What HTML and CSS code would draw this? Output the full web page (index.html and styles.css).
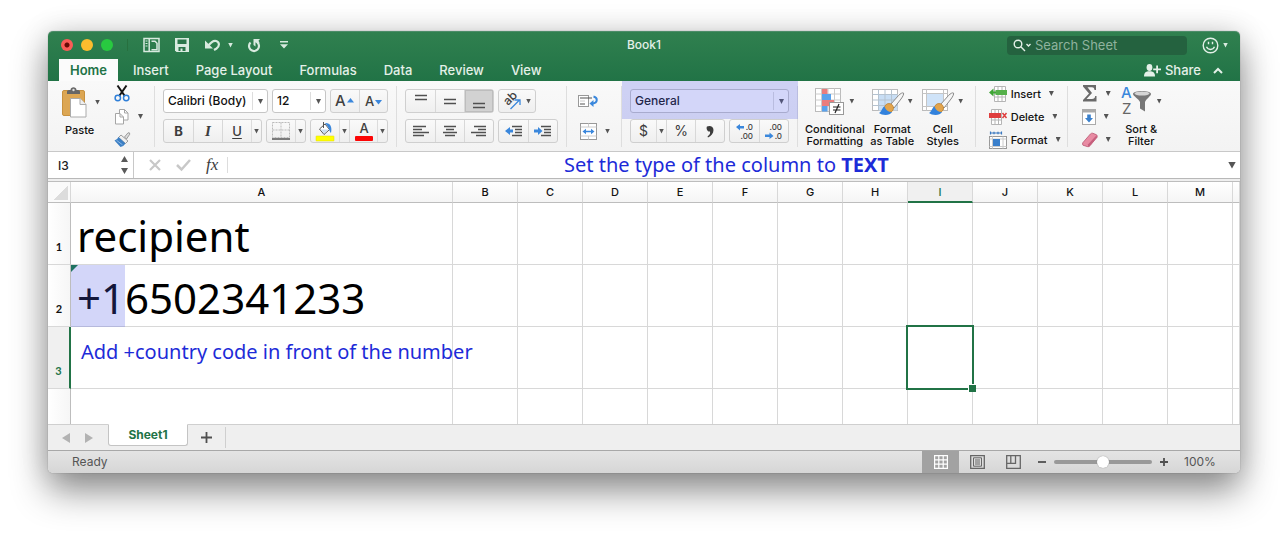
FILE: index.html
```html
<!DOCTYPE html>
<html lang="en">
<head>
<meta charset="utf-8">
<title>Book1</title>
<link rel="stylesheet" href="styles.css">
</head>
<body>
<main class="window">
  <header class="header">
    <div class="titlebar">
      <div class="title-left">
        <div class="lights">
          <button class="light red" aria-label="Close"></button>
          <button class="light yellow" aria-label="Minimize"></button>
          <button class="light green" aria-label="Full screen"></button>
        </div>
        <div class="quick">
          <button class="plain" aria-label="Gallery"><svg width="17" height="16" viewBox="0 0 17 16" fill="none" stroke="#d8eadf" stroke-width="1.5"><rect x="1" y="1.5" width="15" height="13"/><path d="M6.200 1v14M8.500 4.200h3.500l2 2v6.500H8.500"/><path d="M2.500 4h2M2.500 6.500h2M2.500 9h2" stroke-width="1"/></svg></button>
          <button class="plain save" aria-label="Save"><svg width="16" height="16" viewBox="0 0 16 16"><path d="M1 1h14v14H2.500L1 13.500z" fill="#d8eadf"/><path d="M3.500 2.500h9V7h-9zM4.500 10h7v4H8.500v-2.500h-2V14h-2z" fill="#2a764a"/></svg></button>
          <button class="plain undo" aria-label="Undo"><svg width="17" height="14" viewBox="0 0 17 14"><path d="M1 2.500v8h8z" fill="#d8eadf"/><path d="M4 8C7 4 9.500 2.200 12.200 3c3.800 1.200 3.300 5.500.3 7.500L10 12" fill="none" stroke="#d8eadf" stroke-width="2.200"/></svg></button>
          <span class="caret light-caret"></span>
          <button class="plain redo" aria-label="Repeat"><svg width="14" height="15" viewBox="0 0 14 15"><path d="M3.500 4.500a5 5 0 1 0 7 0" fill="none" stroke="#d8eadf" stroke-width="2.200"/><path d="M6.500 1H13L11.500 2.800l1 2-1.500 1.500-2.500-2V8.500L6.500 7z" fill="#d8eadf"/></svg></button>
          <button class="plain more" aria-label="Customize"><svg width="10" height="8" viewBox="0 0 10 8" fill="#d8eadf"><path d="M1 0h8v1.500H1zM1 3.200h8L5 7.500z"/></svg></button>
        </div>
      </div>
      <h1 class="title">Book1</h1>
      <div class="title-right">
        <label class="search">
          <svg width="19" height="13" viewBox="0 0 19 13" fill="none" stroke="#e4f0e8" stroke-width="1.400"><circle cx="5" cy="5" r="3.800"/><path d="M7.800 7.800 12 12M13.500 5l2 2 2-2"/></svg>
          <input type="search" placeholder="Search Sheet" aria-label="Search Sheet">
        </label>
        <button class="plain" aria-label="Feedback"><svg width="17" height="17" viewBox="0 0 17 17" fill="none" stroke="#e4f0e8" stroke-width="1.400"><circle cx="8.500" cy="8.500" r="7.300"/><path d="M6.500 4.800v2.500M10.500 4.800v2.500M4.500 9.800c1.500 3.500 6.500 3.500 8 0"/></svg></button>
        <span class="caret light-caret"></span>
      </div>
    </div>
    <nav class="tabs">
      <button class="tab active">Home</button>
      <button class="tab">Insert</button>
      <button class="tab">Page Layout</button>
      <button class="tab">Formulas</button>
      <button class="tab">Data</button>
      <button class="tab">Review</button>
      <button class="tab">View</button>
      <button class="share"><svg width="17" height="13" viewBox="0 0 17 13" fill="#e4f0e8"><ellipse cx="5.500" cy="3.500" rx="2.900" ry="3.400"/><path d="M0 12.500c0-4 2-5 4-5.300h3c2 .3 4 1.300 4 5.300z"/><path d="M12.200 1.500h1.800v3h3v1.800h-3v3h-1.800v-3h-3V4.500h3z"/></svg>Share</button>
      <button class="plain fold" aria-label="Collapse ribbon"><svg width="10" height="7" viewBox="0 0 10 7" fill="none" stroke="#e4f0e8" stroke-width="2"><path d="M1 6l4-4 4 4"/></svg></button>
    </nav>
  </header>

  <section class="ribbon" aria-label="Home ribbon">
    <div class="group clipboard">
      <button class="big">
        <span class="big-icon"><svg width="25" height="31" viewBox="0 0 25 31"><rect x="0.500" y="3.500" width="22" height="25" rx="1.500" fill="#dca653" stroke="#c8913e"/><path d="M5 7V4.500Q5 3 7 3h1.500C8.500-.6 14.500-.6 14.500 3H16q2 0 2 1.500V7z" fill="#666"/><circle cx="11.500" cy="3" r="1.200" fill="#ddd"/><path d="M8.500 11.500H18l6 6v12.500H8.500z" fill="#fff" stroke="#aaa"/><path d="M18 11.500v6h6" fill="#eee" stroke="#aaa"/></svg><span class="caret"></span></span>
        <span>Paste</span>
      </button>
      <div class="stack clip-tools">
        <button class="plain" aria-label="Cut"><svg width="16" height="17" viewBox="0 0 16 17" fill="none"><path d="M3.500.5 10.800 11M12.500.5 5.200 11" stroke="#151515" stroke-width="2"/><circle cx="3.800" cy="13" r="2.700" stroke="#2f7fd8" stroke-width="1.500"/><circle cx="12.200" cy="13" r="2.700" stroke="#2f7fd8" stroke-width="1.500"/></svg></button>
        <button class="plain row-tool" aria-label="Copy"><svg width="16" height="16" viewBox="0 0 16 16" fill="#fff" stroke="#a5a5a5"><path d="M5.500.5h5l3.500 3.500v7H5.500z"/><path d="M1.500 4.500h4.500L9.500 8v7h-8z"/><path d="M6 4.500V8h3.500M10.500.5V4H14" fill="none"/></svg><span class="caret"></span></button>
        <button class="plain" aria-label="Format painter"><svg width="17" height="15" viewBox="0 0 17 15"><path d="M10.500 5 14 .8q2.300-.5 1.700 1.500L12.500 7z" fill="#ddd" stroke="#888" stroke-width=".8"/><path d="m7 3 7 6-2.500 2.500-7-6z" fill="#f0f0f0" stroke="#888" stroke-width=".8"/><path d="m4.500 5 7 6.500q-2 3-5 3.500L.5 8.500q3-1 4-3.500z" fill="#3c7fc4"/><path d="m2.500 8.300 6 4.500" stroke="#8ab9e8"/></svg></button>
      </div>
    </div>

    <div class="group rows font-group">
      <div class="line">
        <span class="combo font-name"><select aria-label="Font"><option>Calibri (Body)</option></select></span>
        <span class="combo font-size"><select aria-label="Font size"><option>12</option></select></span>
        <span class="seg narrow"><button aria-label="Increase font size"><svg width="20" height="14" viewBox="0 0 20 14"><text x="0" y="12" class="glyph g15">A</text><path d="M12 8.500h7L15.500 4z" fill="#3a87dc"/></svg></button><button aria-label="Decrease font size"><svg width="19" height="14" viewBox="0 0 19 14"><text x="1" y="12" class="glyph g13">A</text><path d="M11 6h7l-3.500 4.500z" fill="#3a87dc"/></svg></button></span>
      </div>
      <div class="line">
        <span class="seg"><button class="bold">B</button><button class="ital">I</button><button class="under">U</button><button class="drop" aria-label="Underline style"><span class="caret"></span></button></span>
        <span class="seg narrow"><button aria-label="Borders"><svg width="18" height="18" viewBox="0 0 18 18" fill="none" stroke="#bbb"><path d="M.5.5h17v15H.5zM9 .5v15M.5 8h17" stroke-dasharray="2 1"/><path d="M0 17h18" stroke="#555" stroke-width="1.500"/></svg></button><button class="drop" aria-label="Border style"><span class="caret"></span></button></span>
        <span class="seg narrow"><button aria-label="Fill color"><svg width="18" height="20" viewBox="0 0 18 20"><path d="m3.500 8 5.500-5 4.500 5.500L8 13.500z" fill="#fff" stroke="#555"/><path d="M7.500 1v6" stroke="#555" fill="none"/><path d="M4.500 8.500h8l-4.500 4z" fill="#c8dcf0"/><path d="M9 2c5-.5 7.500 3.500 6 10-2-2-1.500-5.500-6-10z" fill="#3a87dc"/><rect y="15" width="18" height="5" rx=".5" fill="#ff0" stroke="#e0da00" stroke-width=".5"/></svg></button><button class="drop" aria-label="More fill colors"><span class="caret"></span></button><button class="part" aria-label="Font color"><svg width="18" height="20" viewBox="0 0 18 20"><text x="9" y="12" text-anchor="middle" class="glyph g13">A</text><rect y="15" width="18" height="5" rx="1" fill="#fb0505"/></svg></button><button class="drop" aria-label="More font colors"><span class="caret"></span></button></span>
      </div>
    </div>

    <div class="group rows">
      <div class="line">
        <span class="seg"><button aria-label="Top align"><svg width="12" height="16" class="strokes" viewBox="0 0 12 16"><path d="M0 2.500h12M0 6.500h12"/></svg></button><button aria-label="Middle align"><svg width="12" height="16" class="strokes" viewBox="0 0 12 16"><path d="M0 6.500h12M0 10.500h12"/></svg></button><button class="on" aria-label="Bottom align"><svg width="12" height="16" class="strokes" viewBox="0 0 12 16"><path d="M0 10.500h12M0 14.500h12"/></svg></button></span>
        <span class="seg"><button class="orient" aria-label="Orientation"><svg width="18" height="18" viewBox="0 0 18 18"><text transform="translate(5 14) rotate(-45)" class="glyph g12">ab</text><path d="m7.500 17 9-9M11.500 8H17v5" fill="none" stroke="#3a87dc" stroke-width="1.300"/></svg><span class="caret"></span></button></span>
      </div>
      <div class="line">
        <span class="seg"><button aria-label="Align left"><svg width="16" height="12" class="strokes" viewBox="0 0 16 12"><path d="M0 1.500h13M0 4.500h9M0 7.500h16M0 10.500h11"/></svg></button><button aria-label="Center"><svg width="14" height="12" class="strokes" viewBox="0 0 14 12"><path d="M1 1.500h12M3 4.500h8M0 7.500h14M2 10.500h10"/></svg></button><button aria-label="Align right"><svg width="16" height="12" class="strokes" viewBox="0 0 16 12"><path d="M3 1.500h12M7 4.500h8M0 7.500h15M5 10.500h10"/></svg></button></span>
        <span class="seg"><button aria-label="Decrease indent"><svg width="18" height="12" viewBox="0 0 18 12"><path d="M0 6 5 2v2.500h3v3H5V10z" fill="#3a87dc"/><path class="strokes" d="M7 1.500h10M10 4.500h7M10 7.500h7M7 10.500h10"/></svg></button><button aria-label="Increase indent"><svg width="18" height="12" viewBox="0 0 18 12"><path d="M8.500 6 4 2v2.500H0v3h4V10z" fill="#3a87dc"/><path class="strokes" d="M7 1.500h10M10 4.500h7M10 7.500h7M7 10.500h10"/></svg></button></span>
      </div>
    </div>

    <div class="group rows wrap-group">
      <div class="line"><button class="plain" aria-label="Wrap text"><svg width="21" height="14" viewBox="0 0 21 14" fill="none"><rect x=".5" y="1.500" width="10" height="11" fill="#fff" stroke="#999"/><path d="M2 4h12M2 10h5" stroke="#555" stroke-width="1.200"/><path d="M2 7h5" stroke="#ccc"/><path d="M15.500 2.500c4.500 1 4.500 6.500-1 7" stroke="#3a87dc" stroke-width="2"/><path d="m11.500 9.500 4-3.500v7z" fill="#3a87dc"/></svg></button></div>
      <div class="line"><button class="plain merge" aria-label="Merge"><svg width="17" height="17" viewBox="0 0 17 17" fill="none"><rect x=".5" y=".5" width="16" height="16" fill="#fff" stroke="#999"/><path d="M.5 4h16M.5 13h16M8.500.5V4M8.500 13v3.500" stroke="#ccc"/><path d="M4 8.500h9" stroke="#3a87dc" stroke-width="1.500"/><path d="M2.500 8.500 6 5.700v5.600zM14.500 8.500 11 5.700v5.600z" fill="#3a87dc"/></svg><span class="caret"></span></button></div>
    </div>

    <div class="group rows number-group">
      <div class="line"><span class="combo format"><select aria-label="Number format"><option>General</option></select></span></div>
      <div class="line">
        <span class="seg"><button class="sym dollar">$</button><button class="drop" aria-label="Currencies"><span class="caret"></span></button><button class="sym part">%</button><button aria-label="Comma style"><svg width="8" height="13" viewBox="0 0 8 13"><path d="M1 1.500C4 0 7.500 1.500 7.500 5c0 3.500-2.500 6-5.500 7.500l-.5-1C3.500 10 4.500 8.500 4 6.500 1 7 0 3 1 1.500z" fill="#3c3c3c"/></svg></button></span>
        <span class="seg"><button aria-label="Increase decimal"><svg width="18" height="17" viewBox="0 0 18 17"><path d="M0 4 4 1v2h4v2.500H4v2z" fill="#3a87dc"/><text x="17" y="7" text-anchor="end" class="glyph g8">.0</text><text x="17" y="16" text-anchor="end" class="glyph g8">.00</text></svg></button><button aria-label="Decrease decimal"><svg width="18" height="17" viewBox="0 0 18 17"><path d="M8.500 13 4.500 9.500v2H0V14h4.500v2z" fill="#3a87dc"/><text x="17" y="7" text-anchor="end" class="glyph g8">.00</text><text x="17" y="16" text-anchor="end" class="glyph g8">.0</text></svg></button></span>
      </div>
      <div class="format-highlight"></div>
    </div>

    <div class="group styles-group">
      <button class="big">
        <span class="big-icon"><svg width="30" height="30" viewBox="0 0 30 30"><rect x=".5" y="2.500" width="25" height="23" fill="#fff" stroke="#bbb"/><path d="M6.500 2.500v23M13 2.500v23M19.500 2.500v23M.5 8h25M.5 14h25M.5 20h25" stroke="#ccc"/><path d="M7 3h5.500v5H7zM7 14h12v6H7z" fill="#ea7d7d"/><path d="M7 8h9v6H7zM7 20h5.500v5.500H7z" fill="#5aa2ec"/><rect x="14.500" y="16.500" width="14" height="12" fill="#fff" stroke="#999"/><path d="M18 21h7.500M18 24h7.500M24 18l-4 9" stroke="#222" stroke-width="1.200"/></svg><span class="caret"></span></span>
        <span>Conditional<br>Formatting</span>
      </button>
      <button class="big">
        <span class="big-icon"><svg width="32" height="30" viewBox="0 0 32 30"><rect x=".5" y="3.500" width="25" height="21" fill="#fff" stroke="#bbb"/><path d="M7 8h18.500v16.500H7z" fill="#c8def5"/><path d="M6.500 3.500v21M13 3.500v21M19.500 3.500v21M.5 8.500h25M.5 14h25M.5 19.500h25" stroke="#b5c3d0"/><path d="M31.500 7c-1-.6-3 .5-5 2.500l-8 9 3.500 3.500 7-9c2-2.700 3-5 2.500-6z" fill="#f5f5f5" stroke="#8a8a8a"/><circle cx="17" cy="22" r="4.500" fill="#e2a44c" stroke="#b87b2a" stroke-width=".7"/><path d="M12.500 20.500c-2 .3-2.500 4.500-5.500 6.500 3 2.500 11 3 13-1-4 0-6.500-2-7.500-5.500z" fill="#3382dc"/></svg><span class="caret"></span></span>
        <span>Format<br>as Table</span>
      </button>
      <button class="big">
        <span class="big-icon"><svg width="32" height="30" viewBox="0 0 32 30"><rect x=".5" y="3.500" width="25" height="21" fill="#fff" stroke="#bbb"/><path d="M4.500 3.500v21M21.500 3.500v21M.5 7.500h25M.5 20.500h25" stroke="#c5c5c5"/><path d="M5 8h16v12H5z" fill="#cfe3f8"/><path d="M31.500 7c-1-.6-3 .5-5 2.500l-8 9 3.500 3.500 7-9c2-2.700 3-5 2.500-6z" fill="#f5f5f5" stroke="#8a8a8a"/><circle cx="17" cy="22" r="4.500" fill="#e2a44c" stroke="#b87b2a" stroke-width=".7"/><path d="M12.500 20.500c-2 .3-2.500 4.500-5.500 6.500 3 2.500 11 3 13-1-4 0-6.500-2-7.500-5.500z" fill="#3382dc"/></svg><span class="caret"></span></span>
        <span>Cell<br>Styles</span>
      </button>
    </div>

    <div class="group stack cells-group">
      <button class="row-tool"><svg width="18" height="16" viewBox="0 0 18 16"><path d="M5.500.5h11v15h-11zM9 .5v15M13 .5v15M5.500 11h11" fill="#fff" stroke="#b5b5b5"/><rect x="6.500" y="4" width="11.500" height="5" fill="#55b04a"/><path d="M0 6.500 4.500 2.500v3H7v2H4.500v3z" fill="#3fa535"/></svg>Insert<span class="caret"></span></button>
      <button class="row-tool"><svg width="18" height="16" viewBox="0 0 18 16"><path d="M2.500.5h10v15h-10zM6 .5v15M9.500.5v15M2.500 11h10" fill="#fff" stroke="#b5b5b5"/><rect y="4" width="12" height="5" fill="#df3f3f"/><path d="m13.500 4 4 5M17.500 4l-4 5" stroke="#df3f3f" stroke-width="1.500"/></svg>Delete<span class="caret"></span></button>
      <button class="row-tool"><svg width="18" height="18" viewBox="0 0 18 18"><path d="M1 2h12M1.500.5v3M12.500.5v3M5 .8v2.400M9 .8v2.400" stroke="#3a78c0" stroke-width="1.200"/><rect x=".5" y="5.500" width="17" height="12" fill="#fff" stroke="#999"/><path d="M3.500 5.500v12M14 5.500v12M.5 8h17M.5 15.500h17" stroke="#ccc"/><rect x="4" y="8" width="7" height="7" fill="#3a80cc"/></svg>Format<span class="caret"></span></button>
    </div>

    <div class="group edit-group">
      <div class="stack">
        <button class="row-tool" aria-label="AutoSum"><svg width="16" height="17" viewBox="0 0 16 17"><path d="M1 0h13v5h-1.500c-.3-2-1-2.700-2.500-2.700H5.500L10 8l-5.500 6H10c2 0 2.800-.8 3.200-3h1.300v5.500H1V15l6-6.500L1 1.500z" fill="#6a6a6a"/></svg><span class="caret"></span></button>
        <button class="row-tool" aria-label="Fill"><svg width="14" height="16" viewBox="0 0 14 16"><rect x=".5" y=".5" width="13" height="15" fill="#fff" stroke="#aaa"/><path d="M.5 1h13v2.500H.5z" fill="#aaa"/><path d="M5.200 5.500h3.600V9H11l-4 4.500L3 9h2.200z" fill="#3a80cc"/></svg><span class="caret"></span></button>
        <button class="row-tool" aria-label="Clear"><svg width="16" height="16" viewBox="0 0 17 16"><path d="M.8 11 9 1.500q1-1 2.500-.7l4 1.700q.9.700.6 2.500L8.500 14q-1 1.500-3 1L1 13.500q-.8-1-.2-2.500z" fill="#e88ba3" stroke="#b5506c" stroke-width=".8"/><path d="m6.500 12.500 9-9.500.3 2L8.500 14q-1 1.200-2.200 1z" fill="#c65f7d"/></svg><span class="caret"></span></button>
      </div>
      <button class="big">
        <span class="big-icon"><svg width="32" height="30" viewBox="0 0 32 30"><text x="0" y="12" class="glyph g15 az">A</text><text x="1" y="28" class="glyph g15 zed">Z</text><path d="M12 8c0-4 18-4 18 0 0 2-5 5-6 8v9.500l-5-3V16c-1-3-7-6-7-8z" fill="#777"/><ellipse cx="21" cy="7.500" rx="7.500" ry="2" fill="#d5d5d5"/></svg><span class="caret"></span></span>
        <span>Sort &amp;<br>Filter</span>
      </button>
    </div>
  </section>

  <section class="formula-bar">
    <div class="namebox">
      <input value="I3" aria-label="Name box">
      <svg width="9" height="18" viewBox="0 0 9 18" fill="#5a5a5a"><path d="M1 6h7L4.500 0zM1 12h7l-3.500 6z"/></svg>
    </div>
    <button class="plain" aria-label="Cancel"><svg width="12" height="12" viewBox="0 0 12 12" stroke="#c8c8c8" stroke-width="2.200"><path d="m1 1 10 10M11 1 1 11"/></svg></button>
    <button class="plain" aria-label="Enter"><svg width="15" height="12" viewBox="0 0 15 12" fill="none" stroke="#c8c8c8" stroke-width="2.500"><path d="m1 6 4.500 4.500L14 1"/></svg></button>
    <button class="fx" aria-label="Insert function">fx</button>
    <input class="formula" aria-label="Formula">
    <span class="caret big-caret"></span>
    <p class="note type-note">Set the type of the column to <b>TEXT</b></p>
  </section>

  <div class="sheet">
    <table class="grid">
      <colgroup><col class="c-head"><col class="c-a"><col class="c-n" span="12"><col></colgroup>
      <thead>
        <tr><th class="corner"></th><th>A</th><th>B</th><th>C</th><th>D</th><th>E</th><th>F</th><th>G</th><th>H</th><th class="sel">I</th><th>J</th><th>K</th><th>L</th><th>M</th><th></th></tr>
      </thead>
      <tbody>
        <tr><th>1</th><td>recipient</td><td></td><td></td><td></td><td></td><td></td><td></td><td></td><td></td><td></td><td></td><td></td><td></td><td></td></tr>
        <tr><th>2</th><td class="flagged"><span class="prefix-highlight"></span>+16502341233</td><td></td><td></td><td></td><td></td><td></td><td></td><td></td><td></td><td></td><td></td><td></td><td></td><td></td></tr>
        <tr><th class="sel">3</th><td class="noted"><p class="note code-note">Add +country code in front of the number</p></td><td></td><td></td><td></td><td></td><td></td><td></td><td></td><td class="current"></td><td></td><td></td><td></td><td></td><td></td></tr>
        <tr class="cut"><th></th><td></td><td></td><td></td><td></td><td></td><td></td><td></td><td></td><td></td><td></td><td></td><td></td><td></td><td></td></tr>
      </tbody>
    </table>
  </div>

  <nav class="sheets">
    <button class="plain" aria-label="Previous sheet"><svg width="8" height="10" viewBox="0 0 8 10" fill="#b2b2b2"><path d="M8 0v10L0 5z"/></svg></button>
    <button class="plain" aria-label="Next sheet"><svg width="8" height="10" viewBox="0 0 8 10" fill="#b2b2b2"><path d="M0 0v10l8-5z"/></svg></button>
    <button class="sheet-tab">Sheet1</button>
    <button class="add" aria-label="Add sheet"><svg width="11" height="11" viewBox="0 0 11 11" stroke="#505050" stroke-width="1.800"><path d="M5.500 0v11M0 5.500h11"/></svg></button>
  </nav>

  <footer class="status">
    <span class="ready">Ready</span>
    <button class="view on" aria-label="Normal view"><svg width="14" height="14" viewBox="0 0 14 14" fill="none" stroke="#fff" stroke-width="1.200"><path d="M.6.6h12.800v12.800H.6zM4.800.6v12.800M9.200.6v12.800M.6 4.800h12.800M.6 9.200h12.800"/></svg></button>
    <button class="view" aria-label="Page layout view"><svg width="15" height="14" viewBox="0 0 15 14" fill="none" stroke="#666" stroke-width="1.300"><path d="M.7.7h13.600v12.600H.7z"/><path d="M3.500 2.800h8v8.400h-8zM5 5h5M5 7h5M5 9h5" stroke-width="1"/></svg></button>
    <button class="view" aria-label="Page break view"><svg width="15" height="14" viewBox="0 0 15 14" fill="none" stroke="#666" stroke-width="1.300"><path d="M.7.7h13.600v12.600H.7zM4.800.7v7.600M9.500.7v7.600H.7"/></svg></button>
    <button class="plain zoom-out" aria-label="Zoom out"><svg width="8" height="8" viewBox="0 0 8 8" stroke="#505050" stroke-width="1.800"><path d="M0 4h8"/></svg></button>
    <input class="zoom" type="range" min="0" max="200" value="100" aria-label="Zoom">
    <button class="plain" aria-label="Zoom in"><svg width="8" height="8" viewBox="0 0 8 8" stroke="#505050" stroke-width="1.800"><path d="M0 4h8M4 0v8"/></svg></button>
    <span class="percent">100%</span>
  </footer>
</main>
</body>
</html>
```
FILE: styles.css
```css
* { box-sizing: border-box; }
body {
  margin: 0;
  padding: 31px 48px 67px;
  background: #fff;
  font: 500 11px/12px Inter, "Liberation Sans", sans-serif;
  color: #222;
  overflow: hidden;
}
button, input, select { font: inherit; color: inherit; margin: 0; padding: 0; border: 0; background: none; }
button { display: flex; flex: none; align-items: center; justify-content: center; }
svg { display: block; flex: none; overflow: visible; }
p { margin: 0; }

.window {
  border-radius: 5px;
  box-shadow: 0 0 1px rgba(0, 0, 0, .5), 0 18px 36px rgba(0, 0, 0, .44), 0 0 30px rgba(0, 0, 0, .12);
  background: #fff;
}
.caret {
  flex: none;
  width: 5px;
  height: 5px;
  background: #555;
  clip-path: polygon(0 0, 100% 0, 50% 100%);
}
.light-caret { background: #d8eadf; }

/* Title bar and tabs */
.header {
  height: 50px;
  border-radius: 5px 5px 0 0;
  border-top: 1px solid #4c8c68;
  background: linear-gradient(#30804f, #217346);
  color: #e4f0e8;
}
.titlebar { display: grid; grid-template-columns: 1fr auto 1fr; align-items: center; height: 26px; }
.title-left, .title-right, .quick, .lights { display: flex; align-items: center; }
.lights { gap: 8px; padding: 0 14px 0 13px; margin-right: 15px; border-right: 1px solid #27703f; }
.light { width: 12px; height: 12px; border-radius: 50%; }
.red { background: radial-gradient(circle, #6b0a06 0 2px, #fc5b57 3px); }
.yellow { background: #fdbc2e; }
.green { background: #28c940; }
.save { margin-left: 14px; }
.undo { margin: 0 7px 0 14px; }
.redo { margin: 0 18px 0 14px; }
.title { margin: 0; font-size: 12px; font-weight: 500; line-height: 16px; }
.title-right { justify-content: flex-end; padding-right: 12px; gap: 4px; }
.search {
  display: flex;
  align-items: center;
  gap: 3px;
  width: 180px;
  height: 19px;
  margin-right: 11px;
  padding-left: 6px;
  border-radius: 4px;
  background: #24623f;
}
.search input { flex: 1; min-width: 0; font-size: 13px; font-weight: 400; outline: 0; }
.search input::placeholder { color: #8fb39e; opacity: 1; }

.tabs { display: flex; align-items: stretch; height: 23px; padding: 1px 17px 0 11px; }
.tab { padding: 0 13px 0 14px; font-size: 13px; line-height: 16px; }
.tab.active { width: 59px; padding: 0; margin-right: 1px; background: #fbfbfb; color: #217346; font-weight: 600; }
.share { gap: 4px; margin: 0 12px 0 auto; font-size: 13px; }

/* Ribbon */
.ribbon {
  display: flex;
  align-items: stretch;
  height: 71px;
  padding: 5px 0 4px;
  border-bottom: 1px solid #c8c8c8;
  background: linear-gradient(#f9f9f9, #f3f3f3);
}
.group { display: flex; padding: 0 8px; border-right: 1px solid #dedede; }
.group:last-child { border-right: 0; }
.rows { position: relative; flex-direction: column; gap: 6px; padding-top: 3px; }
.line { display: flex; align-items: center; gap: 4px; height: 24px; }
.combo {
  position: relative;
  display: flex;
  height: 24px;
  border: 1px solid #c6c6c6;
  border-radius: 3px;
  background: #fff;
}
.combo select { flex: 1; min-width: 0; padding-left: 4px; appearance: none; font-size: 12px; color: #111; outline: 0; }
.combo::before { content: ""; position: absolute; right: 14px; top: 2px; bottom: 2px; border-left: 1px solid #ddd; }
.combo::after {
  content: "";
  position: absolute;
  right: 4px;
  top: 9px;
  width: 5px;
  height: 5px;
  background: #555;
  clip-path: polygon(0 0, 100% 0, 50% 100%);
}
.font-name { width: 105px; }
.font-size { width: 54px; }
.format { width: 159px; }
.seg {
  display: flex;
  height: 24px;
  border: 1px solid #cfcfcf;
  border-radius: 3px;
  background: linear-gradient(#fafafa, #efefef);
}
.seg button { width: 29px; }
.seg.narrow button { width: 28px; }
.seg button + button:not(.drop) { border-left: 1px solid #d8d8d8; }
.seg button.drop, .seg.narrow button.drop { width: 10px; border-left: 1px solid #dcdcdc; }
.seg .on { background: #d2d2d2; box-shadow: inset 0 0 0 1px #bdbdbd; }
.seg .orient { width: 36px; gap: 5px; }
.bold { font-size: 13px; font-weight: 700; color: #3c3c3c; }
.ital { font: italic 700 15px/16px "Liberation Serif", serif; color: #3c3c3c; }
.under { font-size: 13px; text-decoration: underline; text-underline-offset: 2px; color: #3c3c3c; }
.sym { font-size: 14px; font-weight: 400; color: #3c3c3c; }
.seg button.dollar { width: 25px; }
.glyph { font-family: Inter, sans-serif; font-weight: 500; fill: #404040; }
.g8 { font-size: 8px; }
.g12 { font-size: 12px; }
.g13 { font-size: 13px; }
.g15 { font-size: 15px; }
.az { fill: #3a87dc; }
.zed { fill: #666; font-weight: 400; }
.strokes { fill: none; stroke: #505050; stroke-width: 1.3; }

.big { flex-direction: column; justify-content: flex-start; text-align: center; color: #111; }
.big-icon { display: flex; align-items: center; justify-content: center; gap: 4px; height: 32px; margin-bottom: 7px; }
.big > span:last-child { white-space: nowrap; }
.stack { display: flex; flex-direction: column; }
.stack button { height: 23px; justify-content: flex-start; }
.row-tool { gap: 8px; }
.clipboard { width: 107px; padding: 0 0 0 14px; gap: 10px; }
.clipboard .big { width: 40px; align-items: flex-start; }
.clipboard .big > span:last-child { padding-left: 3px; }
.clipboard .big-icon { gap: 8px; margin-bottom: 6px; }
.clipboard .clip-tools { margin: -4px 0 0 2px; }
.wrap-group { width: 55px; padding-left: 11px; padding-right: 0; }
.merge { gap: 8px; padding-left: 2px; }
.format-highlight { position: absolute; left: 0; right: -1px; top: -5px; height: 38px; background: rgba(80, 90, 230, .25); pointer-events: none; }
.styles-group { padding: 0 9px 0 7px; gap: 7px; }
.styles-group .big:nth-child(2) { width: 41px; }
.styles-group .big:nth-child(3) { width: 46px; }
.cells-group { width: 92px; padding: 0 0 0 13px; }
.cells-group .row-tool, .edit-group .stack .row-tool { position: relative; top: -4px; }
.cells-group .row-tool { gap: 4px; color: #111; }
.cells-group .caret { margin-left: 4px; }
.edit-group { padding: 0 0 0 14px; gap: 10px; }

/* Formula bar */
.formula-bar {
  position: relative;
  display: flex;
  align-items: center;
  gap: 15px;
  height: 30px;
  padding: 0 4px 3px 0;
  border-bottom: 1px solid #bdbdbd;
  background: linear-gradient(#fff 26px, #b8b8b8 26px, #b8b8b8 27px, #efefef 27px);
}
.namebox { display: flex; align-items: center; width: 86px; height: 26px; padding: 0 4px 0 10px; border-right: 1px solid #c8c8c8; }
.namebox input { flex: 1; min-width: 0; font-size: 12px; outline: 0; }
.fx { font: italic 17px/18px "Liberation Serif", serif; color: #3c3c3c; }
.formula { flex: 1; min-width: 0; height: 16px; margin-left: -6px; border-left: 1px solid #ddd; outline: 0; }
.big-caret { width: 8px; height: 7px; }
.note { font: 400 20px/24px "Noto Sans", sans-serif; color: #1d2bd8; white-space: nowrap; }
.type-note { position: absolute; left: 516px; top: 1px; }

/* Grid */
.sheet { height: 242px; overflow: hidden; }
.grid { width: 100%; border-collapse: separate; border-spacing: 0; table-layout: fixed; }
.c-head { width: 23px; }
.c-a { width: 382px; }
.c-n { width: 65px; }
.grid th, .grid td { padding: 0; border: 0 solid #d8d8d8; border-width: 0 1px 1px 0; }
.grid thead th { height: 21px; border-bottom-color: #bdbdbd; background: linear-gradient(#fff, #f5f5f5); font: 500 11px/19px Inter, sans-serif; color: #111; }
.grid thead .corner { background: linear-gradient(135deg, transparent 50%, #dcdcdc 50%) 5px 3px / 15px 15px no-repeat #fafafa; }
.grid thead .sel { background: #f0f0f0; border-bottom: 2px solid #217346; color: #217346; line-height: 18px; }
.grid tbody th { height: 62px; padding-bottom: 10px; border-right-color: #bdbdbd; background: linear-gradient(90deg, #fff, #f6f6f6); font: 700 11px/14px Lato, sans-serif; vertical-align: bottom; color: #111; }
.grid tbody .sel { background: #f0f0f0; border-right: 2px solid #217346; color: #217346; }
.grid td { position: relative; padding: 4px 0 0 6px; font: 400 42px/48px "Noto Sans", sans-serif; color: #000; }
.grid .cut th, .grid .cut td { border-bottom: 0; }
.flagged::before { content: ""; position: absolute; left: 0; top: 0; width: 7px; height: 7px; background: #0e7a35; clip-path: polygon(0 0, 100% 0, 0 100%); }
.prefix-highlight { position: absolute; left: 0; top: 0; width: 54px; height: 62px; background: rgba(80, 90, 230, .25); }
.code-note { position: absolute; left: 10px; top: 13px; }
.grid .current, .grid .noted { z-index: 1; }
.current::before { content: ""; position: absolute; inset: -2px; border: 2px solid #217346; }
.current::after { content: ""; position: absolute; right: -4px; bottom: -4px; width: 7px; height: 7px; border: solid #fff; border-width: 1px 0 0 1px; background: #217346; }

/* Sheet tabs and status */
.sheets { display: flex; align-items: center; gap: 15px; height: 26px; padding-left: 14px; border-top: 1px solid #cfcfcf; background: #efefef; }
.sheet-tab { align-self: flex-start; width: 80px; height: 22px; margin-top: -1px; border: 1px solid #c4c4c4; border-top-color: #fff; border-radius: 0 0 3px 3px; background: #fff; color: #217346; font-weight: 700; font-size: 12px; }
.add { width: 38px; height: 21px; margin-left: -15px; border-right: 1px solid #cfcfcf; }
.status {
  display: flex;
  align-items: center;
  height: 23px;
  padding-right: 24px;
  border-top: 1px solid #a8a8a8;
  border-radius: 0 0 5px 5px;
  background: linear-gradient(#e4e4e4, #d6d6d6);
  color: #555;
  font-size: 12px;
  font-weight: 400;
}
.ready { flex: 1; padding-left: 24px; }
.view { width: 36px; height: 22px; }
.view.on { width: 37px; background: #a2a2a2; }
.zoom-out { margin-left: 7px; }
.zoom { width: 98px; height: 12px; margin: 0 8px; appearance: none; }
.zoom::-webkit-slider-runnable-track { height: 4px; border-radius: 2px; background: #999; }
.zoom::-webkit-slider-thumb { appearance: none; width: 12px; height: 12px; margin-top: -4px; border-radius: 50%; background: #fff; box-shadow: 0 0 1px #777; }
.percent { width: 32px; margin-left: 16px; }
```
